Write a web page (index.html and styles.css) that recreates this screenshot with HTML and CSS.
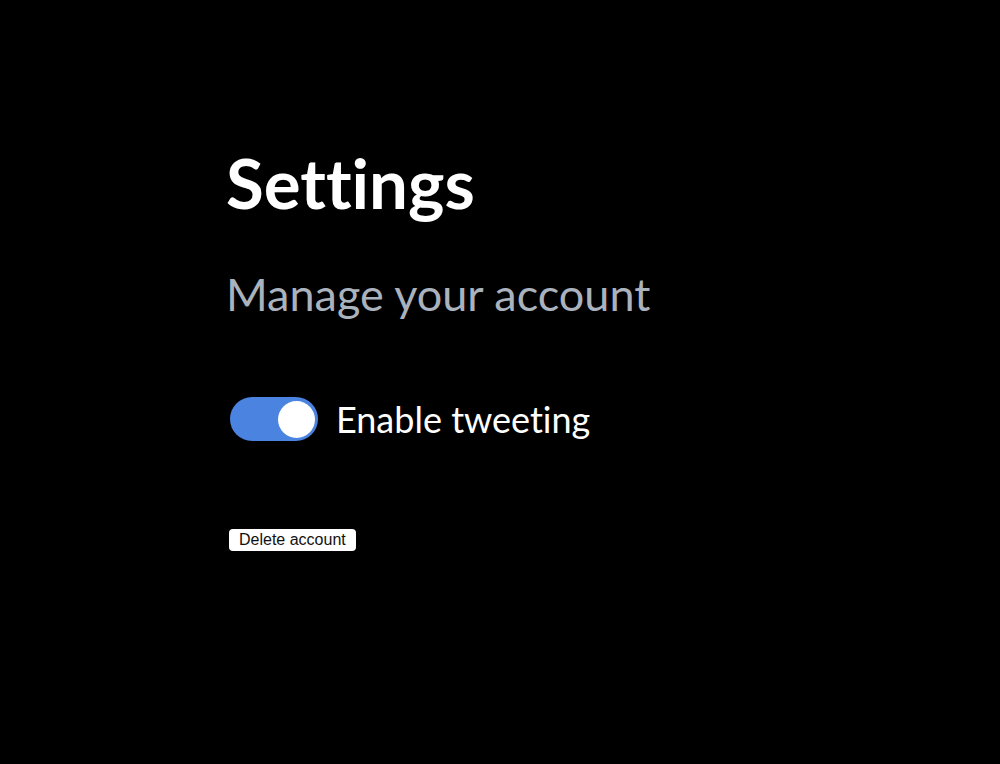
FILE: index.html
```html
<!DOCTYPE html>
<html lang="en">
<head>
    <meta charset="UTF-8">
    <meta name="viewport" content="width=device-width, initial-scale=1.0">
    <title>Settings</title>
    <link rel="stylesheet" href="styles.css">
</head>
<body>
    <main class="settings">
        <h1>Settings</h1>
        <h2>Manage your account</h2>

        <label class="toggle-row">
            <input type="checkbox" class="toggle-input" checked>
            <span class="toggle"></span>
            <span class="toggle-label">Enable tweeting</span>
        </label>

        <button class="delete-btn">Delete account</button>
    </main>
</body>
</html>
```

FILE: styles.css
```css
html, body {
    margin: 0;
    background: #000;
}
body {
    font-family: Lato, "Open Sans", sans-serif;
    font-variant-ligatures: none;
    color: #fff;
}
.settings {
    padding: 138px 0 0 226px;
}
h1 {
    margin: 0;
    font-size: 69px;
    font-weight: 700;
    line-height: 90px;
}
h2 {
    margin: 36px 0 0;
    font-size: 45px;
    font-weight: 400;
    line-height: 60px;
    color: #a9b2bd;
}
.toggle-row {
    display: flex;
    align-items: center;
    gap: 18px;
    margin: 73px 0 0 4px;
    cursor: pointer;
}
.toggle-input {
    display: none;
}
.toggle {
    position: relative;
    width: 88px;
    height: 44px;
    border-radius: 22px;
    background: #4a83e0;
}
.toggle::after {
    content: "";
    position: absolute;
    top: 4px;
    right: 3px;
    width: 37px;
    height: 37px;
    border-radius: 50%;
    background: #fff;
}
.toggle-label {
    font-size: 36px;
    font-weight: 400;
}
.delete-btn {
    margin: 88px 0 0 3px;
    padding: 2px 10px;
    background: #fff;
    color: #111;
    border: none;
    border-radius: 4px;
    font-family: "Liberation Sans", Arial, sans-serif;
    font-size: 16px;
    line-height: 18px;
}
```
